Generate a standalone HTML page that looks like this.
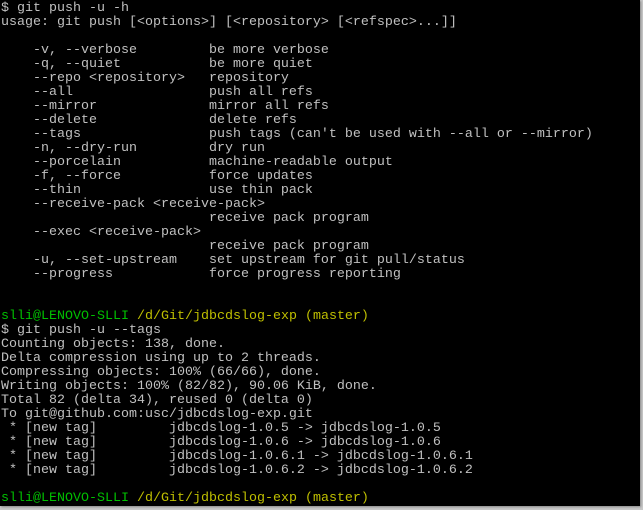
<!DOCTYPE html>
<html><head><meta charset="utf-8"><style>
html,body{margin:0;padding:0;background:#fff;}
.wrap{position:relative;width:643px;height:510px;background:#c8c8c8;overflow:hidden;}
.term{position:absolute;left:0;top:0;width:640px;height:506px;background:#000;box-shadow:1px 1px 2px #888;}
pre{margin:0;padding:2px 0 0 1px;font-family:"Liberation Mono",monospace;font-size:13.33px;line-height:14px;color:#c0c0c0;white-space:pre;}
.g{color:#00bf00}.y{color:#bfbf00}
</style></head><body><div class="wrap"><div class="term"><pre>$ git push -u -h
usage: git push [&lt;options&gt;] [&lt;repository&gt; [&lt;refspec&gt;...]]

    -v, --verbose         be more verbose
    -q, --quiet           be more quiet
    --repo &lt;repository&gt;   repository
    --all                 push all refs
    --mirror              mirror all refs
    --delete              delete refs
    --tags                push tags (can't be used with --all or --mirror)
    -n, --dry-run         dry run
    --porcelain           machine-readable output
    -f, --force           force updates
    --thin                use thin pack
    --receive-pack &lt;receive-pack&gt;
                          receive pack program
    --exec &lt;receive-pack&gt;
                          receive pack program
    -u, --set-upstream    set upstream for git pull/status
    --progress            force progress reporting


<span class="g">slli@LENOVO-SLLI</span> <span class="y">/d/Git/jdbcdslog-exp (master)</span>
$ git push -u --tags
Counting objects: 138, done.
Delta compression using up to 2 threads.
Compressing objects: 100% (66/66), done.
Writing objects: 100% (82/82), 90.06 KiB, done.
Total 82 (delta 34), reused 0 (delta 0)
To git@github.com:usc/jdbcdslog-exp.git
 * [new tag]         jdbcdslog-1.0.5 -&gt; jdbcdslog-1.0.5
 * [new tag]         jdbcdslog-1.0.6 -&gt; jdbcdslog-1.0.6
 * [new tag]         jdbcdslog-1.0.6.1 -&gt; jdbcdslog-1.0.6.1
 * [new tag]         jdbcdslog-1.0.6.2 -&gt; jdbcdslog-1.0.6.2

<span class="g">slli@LENOVO-SLLI</span> <span class="y">/d/Git/jdbcdslog-exp (master)</span></pre></div></div></body></html>
